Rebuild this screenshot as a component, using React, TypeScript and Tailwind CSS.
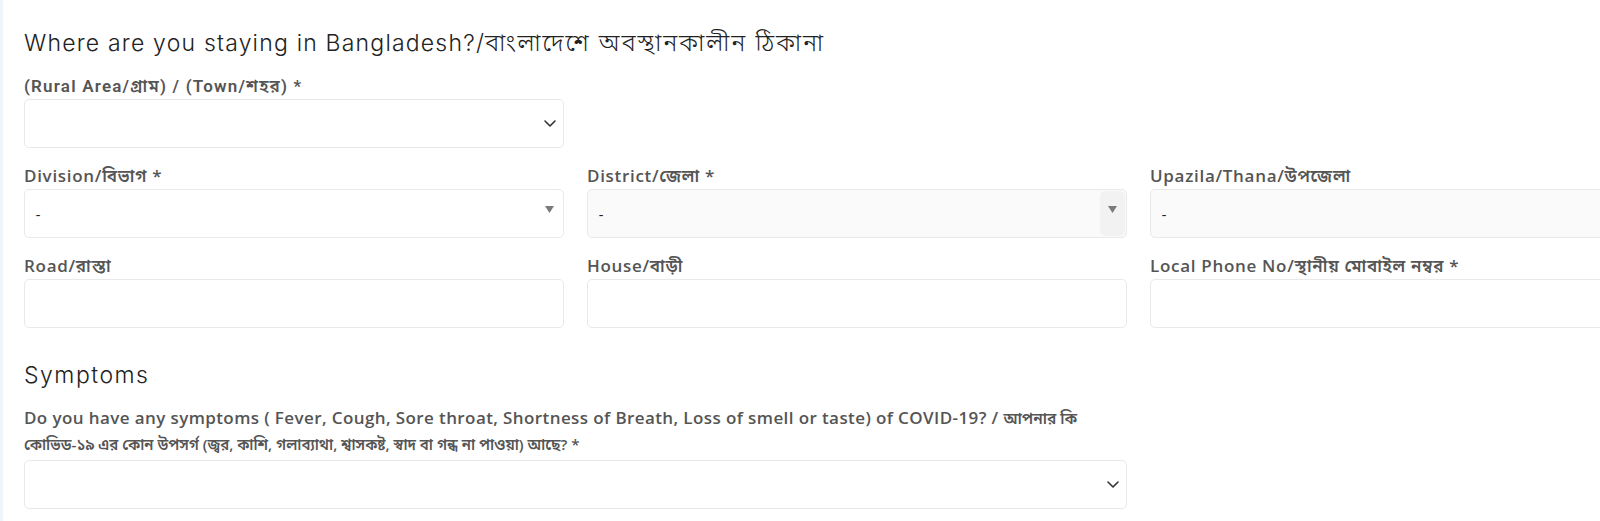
import { ReactNode } from 'react'

const labelCls = "block h-[22px] whitespace-nowrap text-[17px] font-semibold leading-[22px] tracking-[0.7px] text-[#555] [font-family:'Open_Sans','Noto_Sans_Bengali','Noto_Sans',sans-serif]"
const boxCls = 'flex h-[49px] w-full items-center rounded-[5px] border border-[#e9e9e9]'

function Chevron() {
  return (
    <svg width="12" height="7" viewBox="0 0 12 7" fill="none" aria-hidden="true">
      <path d="M1 1l5 5 5-5" stroke="#333" strokeWidth="1.6" strokeLinecap="round" strokeLinejoin="round" />
    </svg>
  )
}

function Caret() {
  return (
    <svg width="9" height="7" viewBox="0 0 9 7" aria-hidden="true">
      <path d="M0 0h9L4.5 7z" fill="#7a7a7a" />
    </svg>
  )
}

function Field({ label, children, className = '' }: { label: ReactNode; children: ReactNode; className?: string }) {
  return (
    <div className={className}>
      <label className={labelCls}>{label}</label>
      <div className="mt-[2px]">{children}</div>
    </div>
  )
}

function NativeSelect() {
  return (
    <div className={`${boxCls} justify-end bg-white pr-[7px]`}>
      <Chevron />
    </div>
  )
}

function TextInput() {
  return <div className={`${boxCls} bg-white`} />
}

function Select2({ disabled, arrow = 'plain' }: { disabled?: boolean; arrow?: 'plain' | 'boxed' | 'none' }) {
  return (
    <div className={`${boxCls} justify-between pl-[11px] ${disabled ? 'bg-[#fafafa]' : 'bg-white'}`}>
      <span className="pt-[4px] text-[15px] text-[#222] [font-family:Roboto,sans-serif]">-</span>
      {arrow === 'plain' && (
        <span className="mr-[9px] flex items-center pb-[8px]">
          <Caret />
        </span>
      )}
      {arrow === 'boxed' && (
        <span className="mr-px flex h-[45px] w-[25px] items-center justify-center rounded-[5px] bg-[#f2f2f2] pb-[8px]">
          <Caret />
        </span>
      )}
    </div>
  )
}

export default function App() {
  return (
    <div className="flex h-[521px] w-full overflow-hidden bg-white">
      <div className="w-[3px] shrink-0 bg-[#eef5fb]" />
      <div className="w-[1700px] shrink-0 pl-[21px] pt-[28px]">
        <h2 className="h-[30px] whitespace-nowrap text-[23px] font-light leading-[30px] tracking-[1.2px] text-[#222] [font-family:Inter,sans-serif]">
          Where are you staying in Bangladesh?/
          <span className="text-[24px] tracking-[2px] [font-family:'Noto_Sans_Bengali','Noto_Sans',sans-serif]">বাংলাদেশে অবস্থানকালীন ঠিকানা</span>
        </h2>

        <div className="mt-[17px] grid grid-cols-[540px_540px_540px] gap-x-[23px] gap-y-[17px]">
          <Field
            label={
              <span className="text-[17px] tracking-[1.2px] [font-family:Roboto,'Noto_Sans_Bengali',sans-serif]">
                (Rural Area/গ্রাম) / (Town/শহর) *
              </span>
            }
            className="col-span-3 w-[540px]"
          >
            <NativeSelect />
          </Field>

          <Field label="Division/বিভাগ *">
            <Select2 arrow="plain" />
          </Field>
          <Field label="District/জেলা *">
            <Select2 disabled arrow="boxed" />
          </Field>
          <Field label="Upazila/Thana/উপজেলা">
            <Select2 disabled arrow="none" />
          </Field>

          <Field label="Road/রাস্তা">
            <TextInput />
          </Field>
          <Field label="House/বাড়ী">
            <TextInput />
          </Field>
          <Field label="Local Phone No/স্থানীয় মোবাইল নম্বর *">
            <TextInput />
          </Field>
        </div>

        <h2 className="mt-[32px] h-[30px] text-[23px] font-light leading-[30px] tracking-[1.5px] text-[#222] [font-family:Inter,sans-serif]">
          Symptoms
        </h2>

        <div className="mt-[14px] w-[1103px]">
          <div className="text-[17px] font-semibold text-[#555] [font-family:'Open_Sans','Noto_Sans_Bengali','Noto_Sans',sans-serif]">
            <div className="h-[27px] whitespace-nowrap leading-[27px] tracking-[0.4px]">
              Do you have any symptoms ( Fever, Cough, Sore throat, Shortness of Breath, Loss of smell or taste) of COVID-19? /{' '}
              <span className="text-[15.5px] tracking-[0px]">আপনার কি</span>
            </div>
            <div className="h-[27px] whitespace-nowrap text-[15px] leading-[27px] tracking-[0px]">
              কোভিড-১৯ এর কোন উপসর্গ (জ্বর, কাশি, গলাব্যাথা, শ্বাসকষ্ট, স্বাদ বা গন্ধ না পাওয়া) আছে? *
            </div>
          </div>
          <div className="mt-[2px]">
            <NativeSelect />
          </div>
        </div>
      </div>
    </div>
  )
}
